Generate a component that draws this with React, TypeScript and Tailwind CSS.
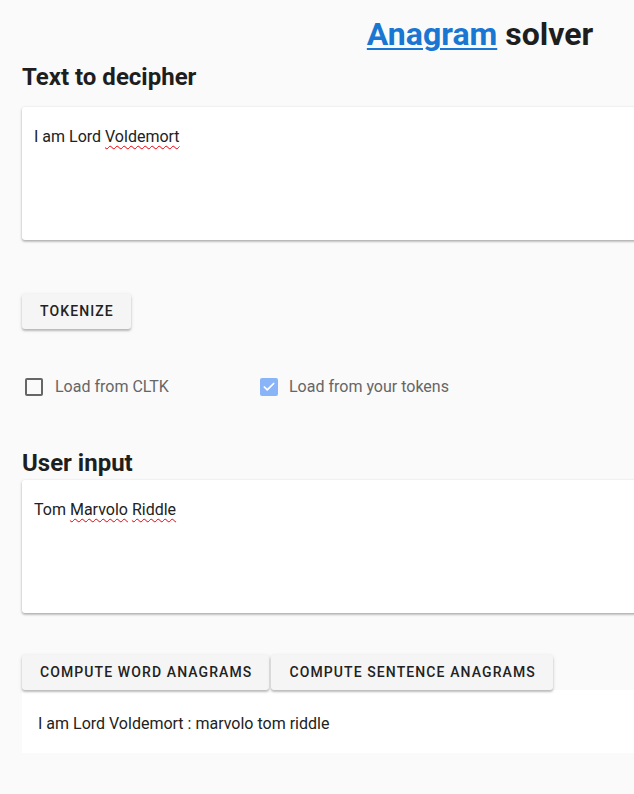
import { Check } from 'lucide-react';

function SpellWord({ children }: { children: string }) {
  return (
    <span className="underline decoration-wavy decoration-red-600 decoration-1 underline-offset-[3px]">
      {children}
    </span>
  );
}

function TextCard({ children }: { children: React.ReactNode }) {
  return (
    <div className="h-[133px] bg-white rounded-[3px] shadow-[0_1px_3px_rgba(0,0,0,0.25),0_2px_2px_rgba(0,0,0,0.12)] px-3 pt-[20px] text-[16px] leading-[20px] text-[#222]">
      {children}
    </div>
  );
}

function Button({ label }: { label: string }) {
  return (
    <button className="h-[35px] pl-[18px] pr-[17px] bg-[#f5f5f5] rounded-[3px] shadow-[0_2px_2px_rgba(0,0,0,0.2),0_1px_4px_rgba(0,0,0,0.12)] text-[14px] font-medium tracking-[1.1px] text-[#222]">
      {label}
    </button>
  );
}

export default function App() {
  return (
    <div className="w-screen min-h-screen overflow-hidden bg-[#fafafa] font-['Roboto',sans-serif]">
      <div className="w-[960px] pl-[22px] pr-[22px]">
        <h1 className="text-center text-[32px] font-bold leading-none pt-[18px] text-[#1e1e1e]">
          <a href="#" className="text-[#1976d2] underline underline-offset-[3px] decoration-[2px]">
            Anagram
          </a>{' '}
          solver
        </h1>

        <h2 className="mt-[15px] text-[24px] font-bold leading-none text-[#1e1e1e]">Text to decipher</h2>
        <div className="mt-[18px]">
          <TextCard>
            I am Lord <SpellWord>Voldemort</SpellWord>
          </TextCard>
        </div>

        <div className="mt-[54px]">
          <Button label="TOKENIZE" />
        </div>

        <div className="mt-[46px] flex items-center text-[16px] text-[#666]">
          <div className="flex items-center gap-3 w-[238px] pl-[3px]">
            <span className="w-[18px] h-[18px] border-2 border-[#666] rounded-[2px]" />
            <span>Load from CLTK</span>
          </div>
          <div className="flex items-center gap-[11px]">
            <span className="w-[18px] h-[18px] rounded-[2px] bg-[#8ab4f8] flex items-center justify-center">
              <Check className="w-[14px] h-[14px] text-white" strokeWidth={3} />
            </span>
            <span>Load from your tokens</span>
          </div>
        </div>

        <h2 className="mt-[52px] text-[24px] font-bold leading-none text-[#1e1e1e]">User input</h2>
        <div className="mt-[5px]">
          <TextCard>
            Tom <SpellWord>Marvolo</SpellWord> <SpellWord>Riddle</SpellWord>
          </TextCard>
        </div>

        <div className="mt-[42px] flex gap-[2px]">
          <Button label="COMPUTE WORD ANAGRAMS" />
          <Button label="COMPUTE SENTENCE ANAGRAMS" />
        </div>
        <div className="h-[63px] bg-white px-4 pt-[24px] text-[16px] leading-[20px] text-[#222]">
          I am Lord Voldemort : marvolo tom riddle
        </div>
      </div>
    </div>
  );
}
